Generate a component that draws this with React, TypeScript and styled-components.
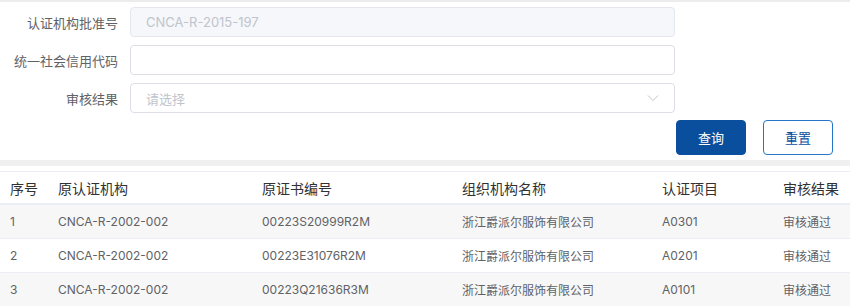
import React from "react";
import styled, { createGlobalStyle } from "styled-components";

const GlobalStyle = createGlobalStyle`
  html, body {
    margin: 0;
    padding: 0;
    background: #fff;
    font-family: Inter, "Noto Sans CJK SC", sans-serif;
  }
`;

const Page = styled.div`
  width: 850px;
  border-top: 2px solid #ececec;
  box-sizing: border-box;
`;

const Form = styled.div`
  display: flex;
  flex-direction: column;
  gap: 8px;
  padding-top: 5px;
`;

const FormRow = styled.div`
  display: flex;
  align-items: center;
`;

const Label = styled.label`
  width: 118px;
  padding-right: 12px;
  text-align: right;
  font-size: 13px;
  color: #606266;
  white-space: nowrap;
`;

const InputBox = styled.div<{ $disabled?: boolean }>`
  width: 545px;
  height: 30px;
  box-sizing: border-box;
  border: 1px solid #dcdfe6;
  border-radius: 4px;
  background: ${(p) => (p.$disabled ? "#f5f7fa" : "#fff")};
  border-color: ${(p) => (p.$disabled ? "#e4e7ed" : "#dcdfe6")};
  display: flex;
  align-items: center;
  justify-content: space-between;
  padding: 0 15px;
  font-size: 13px;
  color: #c0c4cc;
`;

const Actions = styled.div`
  display: flex;
  justify-content: flex-end;
  gap: 17px;
  padding-right: 17px;
  margin-top: -1px;
`;

const Button = styled.button<{ $primary?: boolean }>`
  width: 70px;
  height: 35px;
  border-radius: 4px;
  font-family: inherit;
  font-size: 13px;
  cursor: pointer;
  border: 1px solid ${(p) => (p.$primary ? "#0a4f9e" : "#2675cc")};
  background: ${(p) => (p.$primary ? "#0a4f9e" : "#fff")};
  color: ${(p) => (p.$primary ? "#fff" : "#0a4f9e")};
`;

const Divider = styled.div`
  height: 6px;
  background: #f0f0f0;
  margin: 5px 0 5px;
`;

const Table = styled.div`
  border-top: 1px solid #ebeef5;
`;

const cols = "48px 204px 200px 200px 121px 77px";

const HeadRow = styled.div`
  display: grid;
  grid-template-columns: ${cols};
  height: 31px;
  align-items: center;
  border-bottom: 2px solid #ebeef5;
  padding-left: 10px;
  font-size: 14px;
  color: #303133;
`;

const BodyRow = styled.div<{ $striped?: boolean }>`
  display: grid;
  grid-template-columns: ${cols};
  height: 33px;
  align-items: center;
  border-bottom: 1px solid #ebeef5;
  padding-left: 10px;
  font-size: 12px;
  color: #606266;
  background: ${(p) => (p.$striped ? "#f7f7f8" : "#fff")};
`;

const Cell = styled.div`
  white-space: nowrap;
`;

const Chevron = () => (
  <svg width="12" height="8" viewBox="0 0 12 8" fill="none">
    <path d="M1 1.5 6 6.5 11 1.5" stroke="#c0c4cc" strokeWidth="1" />
  </svg>
);

const rows = [
  ["1", "CNCA-R-2002-002", "00223S20999R2M", "浙江爵派尔服饰有限公司", "A0301", "审核通过"],
  ["2", "CNCA-R-2002-002", "00223E31076R2M", "浙江爵派尔服饰有限公司", "A0201", "审核通过"],
  ["3", "CNCA-R-2002-002", "00223Q21636R3M", "浙江爵派尔服饰有限公司", "A0101", "审核通过"],
];

export default function App() {
  return (
    <Page>
      <GlobalStyle />
      <Form>
        <FormRow>
          <Label>认证机构批准号</Label>
          <InputBox $disabled>CNCA-R-2015-197</InputBox>
        </FormRow>
        <FormRow>
          <Label>统一社会信用代码</Label>
          <InputBox />
        </FormRow>
        <FormRow>
          <Label>审核结果</Label>
          <InputBox>
            请选择
            <Chevron />
          </InputBox>
        </FormRow>
        <Actions>
          <Button $primary>查询</Button>
          <Button>重置</Button>
        </Actions>
      </Form>
      <Divider />
      <Table>
        <HeadRow>
          <Cell>序号</Cell>
          <Cell>原认证机构</Cell>
          <Cell>原证书编号</Cell>
          <Cell>组织机构名称</Cell>
          <Cell>认证项目</Cell>
          <Cell>审核结果</Cell>
        </HeadRow>
        {rows.map((r, i) => (
          <BodyRow key={r[0]} $striped={i % 2 === 0}>
            {r.map((c, j) => (
              <Cell key={j}>{c}</Cell>
            ))}
          </BodyRow>
        ))}
      </Table>
    </Page>
  );
}
